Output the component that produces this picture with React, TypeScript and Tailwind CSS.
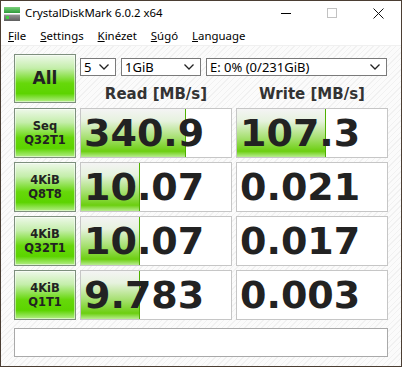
import React from "react";

const results = [
  { label: ["Seq", "Q32T1"], read: "340.9", readPct: 70, write: "107.3", writePct: 59 },
  { label: ["4KiB", "Q8T8"], read: "10.07", readPct: 39, write: "0.021", writePct: 0 },
  { label: ["4KiB", "Q32T1"], read: "10.07", readPct: 39, write: "0.017", writePct: 0 },
  { label: ["4KiB", "Q1T1"], read: "9.783", readPct: 39, write: "0.003", writePct: 0 },
];

const greenBtn =
  "border border-[#7d8f7d] bg-[linear-gradient(to_bottom,#eef8ea_0%,#c4eeaa_28%,#66d80a_60%,#5cd400_82%,#b4ee88_100%)] shadow-[inset_0_0_0_1px_rgba(255,255,255,0.5)] flex flex-col items-center justify-center text-[#222] font-bold";

const Chevron = () => (
  <svg width="10" height="6" viewBox="0 0 10 6" className="shrink-0">
    <polyline points="0.5,0.5 5,5 9.5,0.5" fill="none" stroke="#222" strokeWidth="1.3" />
  </svg>
);

const Select = ({ value, w }: { value: string; w: string }) => (
  <div className={`${w} h-[18px] bg-white border border-[#7a7a7a] flex items-center justify-between pl-[3px] pr-[6px] text-[13px] text-black leading-none`}>
    <span>{value}</span>
    <Chevron />
  </div>
);

const ResultBox = ({ value, pct }: { value: string; pct: number }) => (
  <div className="relative h-full bg-white border border-[#c6c6c6] overflow-hidden">
    {pct > 0 && (
      <div
        className="absolute left-0 top-0 bottom-0 border-r border-[#4fb000] bg-[linear-gradient(to_bottom,#f4f4f4_0%,#e6f2de_25%,#a6e070_60%,#6ccf10_88%,#b8ec90_100%)]"
        style={{ width: `${pct}%` }}
      />
    )}
    <div className="relative h-full flex items-center pl-[3px] font-['DejaVu_Sans',sans-serif] font-bold text-[38px] leading-none text-[#222]">
      {value}
    </div>
  </div>
);

const DriveIcon = () => (
  <svg width="16" height="14" viewBox="0 0 16 14">
    <defs>
      <linearGradient id="gtop" x1="0" y1="0" x2="0" y2="1">
        <stop offset="0" stopColor="#7ad07a" />
        <stop offset="1" stopColor="#2e9a3a" />
      </linearGradient>
      <linearGradient id="gbody" x1="0" y1="0" x2="0" y2="1">
        <stop offset="0" stopColor="#9a9a9a" />
        <stop offset="1" stopColor="#5e5e5e" />
      </linearGradient>
    </defs>
    <rect x="0" y="0" width="16" height="6" fill="url(#gtop)" />
    <rect x="0" y="7" width="16" height="7" fill="url(#gbody)" />
    <rect x="0" y="7" width="16" height="1" fill="#cfcfcf" />
    <rect x="2" y="9" width="3" height="3" fill="#3fd040" />
  </svg>
);

const App: React.FC = () => {
  return (
    <div className="w-[402px] h-[367px] border border-[#4b3e33] bg-white flex flex-col font-['Noto_Sans','Liberation_Sans',sans-serif] overflow-hidden">
      {/* title bar */}
      <div className="h-[24px] flex items-center relative">
        <div className="ml-[3px] mt-[1px]">
          <DriveIcon />
        </div>
        <span className="ml-[5px] text-[11.4px] text-black">CrystalDiskMark 6.0.2 x64</span>
        <div className="ml-auto flex items-center h-full">
          <div className="w-[46px] h-full flex items-center justify-center">
            <div className="w-[10px] h-px bg-black" />
          </div>
          <div className="w-[46px] h-full flex items-center justify-center">
            <div className="w-[10px] h-[10px] border border-[#c2c2c2]" />
          </div>
          <div className="w-[46px] h-full flex items-center justify-center">
            <svg width="11" height="11" viewBox="0 0 11 11">
              <path d="M0.5 0.5 L10.5 10.5 M10.5 0.5 L0.5 10.5" stroke="#111" strokeWidth="1" />
            </svg>
          </div>
        </div>
      </div>

      {/* menu */}
      <div className="h-[20px] flex items-center text-[11.4px] text-black pl-[7px] gap-[14px] pt-[2px]">
        <span><u>F</u>ile</span>
        <span><u>S</u>ettings</span>
        <span><u>K</u>inézet</span>
        <span><u>S</u>úgó</span>
        <span><u>L</u>anguage</span>
      </div>
      <div className="h-px bg-[#f0f0f0]" />

      {/* client */}
      <div className="flex-1 px-[13px] pt-[8px] bg-[repeating-linear-gradient(135deg,#fbfbfb_0px,#fbfbfb_3px,#f1f1f1_3px,#f1f1f1_4px)] flex flex-col">
        <div className="grid grid-cols-[62px_152px_152px] gap-x-[4px]">
          <div className={`${greenBtn} h-[49px] text-[17px] font-['DejaVu_Sans',sans-serif]`}>All</div>
          <div className="col-span-2 flex flex-col">
            <div className="flex gap-[5px] mt-[4px]">
              <Select value="5" w="w-[36px]" />
              <Select value="1GiB" w="w-[80px]" />
              <Select value="E: 0% (0/231GiB)" w="w-[181px]" />
            </div>
            <div className="grid grid-cols-[152px_152px] gap-x-[4px] mt-[11px] font-['DejaVu_Sans',sans-serif] font-bold text-[15px] text-[#333] leading-none">
              <div className="text-center">Read [MB/s]</div>
              <div className="text-center">Write [MB/s]</div>
            </div>
          </div>
        </div>

        <div className="flex flex-col gap-[4px] mt-[5px]">
          {results.map((r, i) => (
            <div key={i} className="grid grid-cols-[62px_152px_152px] gap-x-[4px] h-[50px]">
              <div className={`${greenBtn} text-[11.5px] leading-[14px] font-['DejaVu_Sans',sans-serif]`}>
                <span>{r.label[0]}</span>
                <span>{r.label[1]}</span>
              </div>
              <ResultBox value={r.read} pct={r.readPct} />
              <ResultBox value={r.write} pct={r.writePct} />
            </div>
          ))}
        </div>

        <div className="mt-[8px] h-[29px] bg-white border border-[#a9a9a9]" />
      </div>
    </div>
  );
};

export default App;
